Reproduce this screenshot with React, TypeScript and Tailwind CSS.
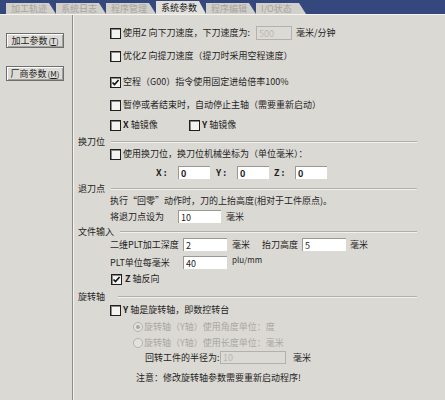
import React from "react";
import clsx from "clsx";

const tabs = ["加工轨迹", "系统日志", "程序管理", "系统参数", "程序编辑", "I/O状态"];

function Check({ checked = false }: { checked?: boolean }) {
  return (
    <span className="flex h-[11px] w-[11px] shrink-0 items-center justify-center border border-[#1f1f1f] bg-[#f3f3f1] shadow-[inset_1px_1px_0_#8a8a8a]">
      {checked && (
        <svg width="9" height="9" viewBox="0 0 9 9">
          <path d="M1.5 4.5 L3.5 6.6 L7.6 2" fill="none" stroke="#111" strokeWidth="1.6" />
        </svg>
      )}
    </span>
  );
}

function Radio({ on = false }: { on?: boolean }) {
  return (
    <span className="flex h-[10px] w-[10px] shrink-0 items-center justify-center rounded-full border border-[#b4b2ad] bg-[#e4e2de]">
      {on && <span className="h-[4px] w-[4px] rounded-full bg-[#a9a7a2]" />}
    </span>
  );
}

function Field({ value, w, disabled = false }: { value: string; w: string; disabled?: boolean }) {
  return (
    <span
      className={clsx(
        "flex h-full shrink-0 items-center pl-[2px] leading-none",
        w,
        disabled
          ? "border border-[#b3b1ac] bg-[#dcdad5] text-[#b9b7b2]"
          : "border-t border-l border-t-[#9a9894] border-l-[#9a9894] bg-white text-[#222]"
      )}
    >
      {value}
    </span>
  );
}

function Section({ label, gap }: { label: string; gap: string }) {
  return (
    <div className="flex h-[12px] items-center pl-[4px] pr-[28px]">
      <span className="shrink-0">{label}</span>
      <span className={clsx("h-[2px] flex-1 border-t border-b border-t-[#b1afaa] border-b-[#f2f1ee]", gap)} />
    </div>
  );
}

function SideButton({ label, hot }: { label: string; hot: string }) {
  return (
    <div className="ml-[6px] flex h-[15px] w-[58px] items-center justify-center border border-[#6e6e6e] bg-[#dddbd6] shadow-[inset_1px_1px_0_#ffffff,inset_-1px_-1px_0_#a3a19c]">
      {label}
      <span className="ml-[1px] text-[8px]">
        (<span className="underline">{hot}</span>)
      </span>
    </div>
  );
}

export default function App() {
  return (
    <div className="flex h-[400px] w-[445px] flex-col overflow-hidden bg-[#dbd9d4] font-['Noto_Sans_CJK_SC',sans-serif] text-[9px] text-[#1f1f1f]">
      {/* tab strip */}
      <div className="flex h-[15px] shrink-0 items-end border-b border-[#f4f3f0] bg-[#34487e] pl-[6px]">
        {tabs.map((t, i) => (
          <div
            key={t}
            className={clsx(
              "flex w-[50px] items-center pl-[5px] [clip-path:polygon(0_0,calc(100%-7px)_0,100%_100%,0_100%)]",
              i === 3 ? "h-[13px] bg-[#e2e0db] text-[#161616]" : "h-[11px] bg-[#d2d0ca] text-[#a6a4a0]"
            )}
          >
            {t}
          </div>
        ))}
      </div>

      <div className="flex flex-1">
        {/* left side */}
        <div className="flex w-[73px] shrink-0 flex-col gap-[18px] border-r border-[#8e8c88] pt-[18px]">
          <SideButton label="加工参数" hot="T" />
          <SideButton label="厂商参数" hot="M" />
        </div>

        {/* right side */}
        <div className="flex flex-1 flex-col border-l border-[#f4f3f0] pt-[11px]">
          <div className="flex h-[14px] items-center pl-[36px]">
            <Check />
            <span className="ml-[2px] w-[133px]">使用Z 向下刀速度，下刀速度为:</span>
            <Field value="500" w="w-[36px]" disabled />
            <span className="ml-[4px]">毫米/分钟</span>
          </div>

          <div className="mt-[9px] flex h-[14px] items-center pl-[36px]">
            <Check />
            <span className="ml-[2px]">优化Z 向提刀速度（提刀时采用空程速度）</span>
          </div>

          <div className="mt-[12px] flex h-[14px] items-center pl-[36px]">
            <Check checked />
            <span className="ml-[2px]">空程（G00）指令使用固定进给倍率100%</span>
          </div>

          <div className="mt-[9px] flex h-[14px] items-center pl-[36px]">
            <Check />
            <span className="ml-[2px]">暂停或者结束时，自动停止主轴（需要重新启动）</span>
          </div>

          <div className="mt-[6px] flex h-[14px] items-center pl-[36px]">
            <div className="flex w-[79px] items-center">
              <Check />
              <span className="ml-[2px]">
                <b>X</b> 轴镜像
              </span>
            </div>
            <Check />
            <span className="ml-[2px]">
              <b>Y</b> 轴镜像
            </span>
          </div>

          <div className="mt-[4px]">
            <Section label="换刀位" gap="ml-[6px]" />
          </div>

          <div className="flex h-[12px] items-center pl-[36px]">
            <Check />
            <span className="ml-[2px]">使用换刀位，换刀位机械坐标为（单位毫米）：</span>
          </div>

          <div className="mt-[6px] flex h-[13px] items-center pl-[82px] font-bold">
            <span className="w-[22px]">X :</span>
            <Field value="0" w="w-[32px]" />
            <span className="ml-[6px] w-[21px]">Y :</span>
            <Field value="0" w="w-[32px]" />
            <span className="ml-[5px] w-[21px]">Z :</span>
            <Field value="0" w="w-[32px]" />
          </div>

          <div className="mt-[4px]">
            <Section label="退刀点" gap="ml-[6px]" />
          </div>

          <div className="flex h-[12px] items-center pl-[36px]">执行“回零”动作时，刀的上抬高度(相对于工件原点)。</div>

          <div className="mt-[3px] flex h-[13px] items-center pl-[36px]">
            <span className="w-[68px]">将退刀点设为</span>
            <Field value="10" w="w-[43px]" />
            <span className="ml-[5px]">毫米</span>
          </div>

          <div className="mt-[3px]">
            <Section label="文件输入" gap="ml-[6px]" />
          </div>

          <div className="flex h-[13px] items-center pl-[36px]">
            <span className="w-[73px]">二维PLT加工深度</span>
            <Field value="2" w="w-[44px]" />
            <span className="ml-[5px] w-[30px]">毫米</span>
            <span className="w-[40px]">抬刀高度</span>
            <Field value="5" w="w-[44px]" />
            <span className="ml-[4px]">毫米</span>
          </div>

          <div className="mt-[5px] flex h-[13px] items-center pl-[36px]">
            <span className="w-[73px]">PLT单位每毫米</span>
            <Field value="40" w="w-[44px]" />
            <span className="mb-[5px] ml-[5px] text-[8px]">plu/mm</span>
          </div>

          <div className="mt-[4px] flex h-[12px] items-center pl-[37px]">
            <Check checked />
            <span className="ml-[3px]">
              <b>Z</b> 轴反向
            </span>
          </div>

          <div className="mt-[6px]">
            <Section label="旋转轴" gap="ml-[13px]" />
          </div>

          <div className="mt-[1px] flex h-[12px] items-center pl-[36px]">
            <Check />
            <span className="ml-[2px]">
              <b>Y</b> 轴是旋转轴，即数控转台
            </span>
          </div>

          <div className="mt-[5px] flex h-[12px] items-center pl-[59px] text-[#aaa8a3]">
            <Radio on />
            <span className="ml-[1px]">旋转轴（Y轴）使用角度单位：度</span>
          </div>

          <div className="mt-[4px] flex h-[12px] items-center pl-[59px] text-[#aaa8a3]">
            <Radio />
            <span className="ml-[1px]">旋转轴（Y轴）使用长度单位：毫米</span>
          </div>

          <div className="mt-[2px] flex h-[13px] items-center pl-[71px]">
            <span className="w-[75px]">回转工件的半径为:</span>
            <Field value="10" w="w-[66px]" disabled />
            <span className="ml-[7px]">毫米</span>
          </div>

          <div className="mt-[8px] flex h-[12px] items-center pl-[62px]">注意：修改旋转轴参数需要重新启动程序!</div>
        </div>
      </div>
    </div>
  );
}
